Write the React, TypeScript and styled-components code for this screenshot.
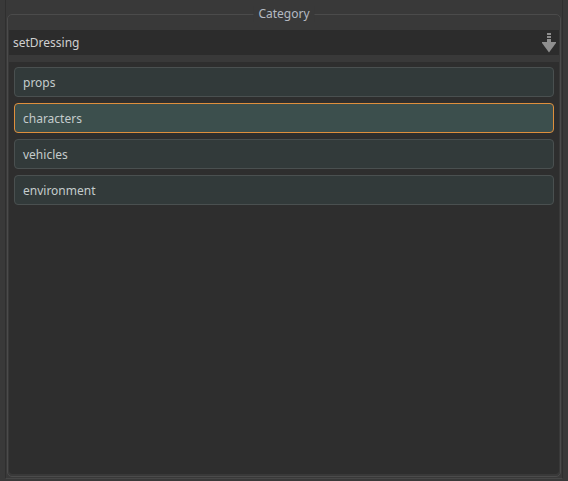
import React from 'react';
import styled, { createGlobalStyle } from 'styled-components';

const GlobalStyle = createGlobalStyle`
	html, body {
		margin: 0;
		padding: 0;
		background: #393939;
		font-family: "Noto Sans", "DejaVu Sans", sans-serif;
	}
	* { box-sizing: border-box; }
`;

const categories = ['props', 'characters', 'vehicles', 'environment'];

const Page = styled.div`
	width: 568px;
	height: 481px;
	overflow: hidden;
	padding: 0 5px;
`;

const Frame = styled.div`
	height: 479px;
	border-left: 1px solid #2f2f2f;
	border-right: 1px solid #2f2f2f;
	border-bottom: 1px solid #474747;
	padding: 14px 1px 1px 1px;
	display: flex;
`;

const GroupBox = styled.fieldset`
	position: relative;
	flex: 1;
	margin: 0;
	min-width: 0;
	border: 1px solid #4b4b4b;
	border-radius: 5px;
	padding: 15px 1px 2px 1px;
	display: flex;
	flex-direction: column;
	gap: 7px;
`;

const Title = styled.span`
	position: absolute;
	top: -9px;
	left: 50%;
	transform: translateX(-50%);
	padding: 0 5px;
	background: #393939;
	color: #b4b9c2;
	font-size: 12px;
	line-height: 16px;
`;

const Combo = styled.div`
	height: 25px;
	flex: none;
	background: #2c2c2c;
	display: flex;
	align-items: center;
	justify-content: space-between;
	padding: 0 2px 0 4px;
	color: #d0d0d0;
	font-size: 12px;
`;

const List = styled.div`
	flex: 1;
	background: #2e2e2e;
	border-radius: 0 0 4px 4px;
	padding: 5px;
	display: flex;
	flex-direction: column;
	gap: 6px;
`;

const Item = styled.div<{ $selected?: boolean }>`
	height: 30px;
	border-radius: 4px;
	border: 1px solid ${p => (p.$selected ? '#df8f3c' : '#4a5050')};
	background: ${p => (p.$selected ? '#3c4f4d' : '#323a3a')};
	color: #c4cccc;
	font-size: 12px;
	display: flex;
	align-items: center;
	padding-left: 8px;
`;

function DownArrow() {
	return (
		<svg width="16" height="22" viewBox="0 0 16 22">
			<g fill="#8f8f8f">
				<rect x="6" y="1" width="4" height="2" />
				<rect x="6" y="4" width="4" height="2" />
				<rect x="6" y="7" width="4" height="3" />
				<polygon points="1,10 15,10 15,11 8,20.5 1,11" />
			</g>
		</svg>
	);
}

export default function App() {
	return (
		<Page>
			<GlobalStyle />
			<Frame>
				<GroupBox>
					<Title>Category</Title>
					<Combo>
						<span>setDressing</span>
						<DownArrow />
					</Combo>
					<List>
						{categories.map(name => (
							<Item key={name} $selected={name === 'characters'}>
								{name}
							</Item>
						))}
					</List>
				</GroupBox>
			</Frame>
		</Page>
	);
}
